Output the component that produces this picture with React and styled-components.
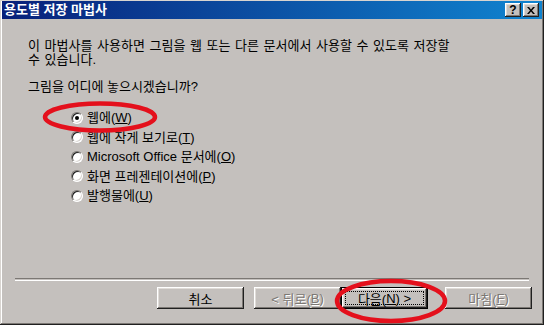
import React from 'react'
import styled, { createGlobalStyle } from 'styled-components'

const Global = createGlobalStyle`
	html, body { margin: 0; padding: 0; background: #c4c0bd; }
	body { font-family: "Liberation Sans", "Noto Sans CJK KR", sans-serif; font-size: 13px; }
`

const Window = styled.div`
	position: relative;
	box-sizing: border-box;
	width: 544px;
	height: 325px;
	display: flex;
	flex-direction: column;
	padding: 1px 2px 2px 2px;
	background: #c4c0bd;
	box-shadow: inset -1px -1px #202020, inset 1px 1px #d8d4d0,
		inset -2px -2px #7c7874, inset 2px 2px #ffffff;
`

const TitleBar = styled.div`
	height: 18px;
	display: flex;
	align-items: center;
	padding: 0 3px 0 2px;
	background: linear-gradient(to right, #08207a, #1084d0);
	color: #fff;
`

const Title = styled.span`
	flex: 1;
	font-weight: bold;
	font-size: 13px;
	line-height: 18px;
`

const CaptionButton = styled.span`
	box-sizing: border-box;
	width: 16px;
	height: 14px;
	margin-left: ${p => p.$gap || 0}px;
	display: flex;
	align-items: center;
	justify-content: center;
	background: #c4c0bd;
	color: #000;
	font-family: "Liberation Sans", sans-serif;
	font-weight: bold;
	font-size: 12px;
	box-shadow: inset -1px -1px #202020, inset 1px 1px #ffffff,
		inset -2px -2px #7c7874, inset 2px 2px #e0dcd8;
`

const Content = styled.div`
	flex: 1;
	padding: 20px 26px 0 26px;
	color: #000;
`

const Paragraph = styled.p`
	margin: 0;
	line-height: 14px;
	word-spacing: 1px;
`

const Question = styled.p`
	margin: 13px 0 0 0;
	line-height: 13px;
`

const Options = styled.div`
	margin: 15px 0 0 43px;
	display: flex;
	flex-direction: column;
`

const Option = styled.label`
	height: 19.5px;
	display: flex;
	align-items: center;
	gap: 4px;
	line-height: 13px;
`

const Radio = styled.span`
	box-sizing: border-box;
	width: 12px;
	height: 12px;
	border-radius: 50%;
	background: #fff;
	border: 1px solid;
	border-color: #7c7874 #ffffff #ffffff #7c7874;
	box-shadow: inset 1px 1px #202020, inset -1px -1px #d8d4d0;
	display: flex;
	align-items: center;
	justify-content: center;
	&::after {
		content: '';
		width: 4px;
		height: 4px;
		border-radius: 50%;
		background: ${p => (p.$checked ? '#000' : 'transparent')};
	}
`

const Footer = styled.div`
	padding: 0 10px 14px 13px;
`

const Separator = styled.div`
	height: 1px;
	margin-right: 3px;
	border-top: 1px solid #7c7874;
	border-bottom: 1px solid #ffffff;
`

const ButtonRow = styled.div`
	margin-top: 6px;
	display: flex;
	justify-content: flex-end;
`

const Button = styled.div`
	box-sizing: border-box;
	width: 87px;
	height: 22px;
	margin-left: ${p => p.$gap || 0}px;
	display: flex;
	align-items: center;
	justify-content: center;
	position: relative;
	background: #c4c0bd;
	color: ${p => (p.$disabled ? '#7c7874' : '#000')};
	text-shadow: ${p => (p.$disabled ? '1px 1px #fff' : 'none')};
	box-shadow: ${p =>
		p.$default
			? 'inset 0 0 0 1px #000, inset -2px -2px #202020, inset 2px 2px #fff, inset -3px -3px #7c7874, inset 3px 3px #e0dcd8'
			: 'inset -1px -1px #202020, inset 1px 1px #fff, inset -2px -2px #7c7874, inset 2px 2px #e0dcd8'};
`

const Focus = styled.span`
	position: absolute;
	inset: 4px;
	border: 1px dotted #000;
`

const Marks = styled.svg`
	position: absolute;
	left: 0;
	top: 0;
	pointer-events: none;
`

const options = [
	{ label: '웹에', key: 'W', checked: true },
	{ label: '웹에 작게 보기로', key: 'T' },
	{ label: 'Microsoft Office 문서에', key: 'O' },
	{ label: '화면 프레젠테이션에', key: 'P' },
	{ label: '발행물에', key: 'U' },
]

const App = () => (
	<Window>
		<Global />
		<TitleBar>
			<Title>용도별 저장 마법사</Title>
			<CaptionButton>?</CaptionButton>
			<CaptionButton $gap={2}>
				<svg width="8" height="7" viewBox="0 0 8 7">
					<path d="M0 0h2l2 2.5L6 0h2L5 3.5 8 7H6L4 4.5 2 7H0l3-3.5z" fill="#000" />
				</svg>
			</CaptionButton>
		</TitleBar>
		<Content>
			<Paragraph>
				이 마법사를 사용하면 그림을 웹 또는 다른 문서에서 사용할 수 있도록 저장할
				<br />
				수 있습니다.
			</Paragraph>
			<Question>그림을 어디에 놓으시겠습니까?</Question>
			<Options>
				{options.map(o => (
					<Option key={o.key}>
						<Radio $checked={o.checked} />
						<span>
							{o.label}(<u>{o.key}</u>)
						</span>
					</Option>
				))}
			</Options>
		</Content>
		<Footer>
			<Separator />
			<ButtonRow>
				<Button>취소</Button>
				<Button $gap={10} $disabled>
					&lt; 뒤로(<u>B</u>)
				</Button>
				<Button $default>
					<Focus />
					다음(<u>N</u>) &gt;
				</Button>
				<Button $gap={17} $disabled>
					마침(<u>F</u>)
				</Button>
			</ButtonRow>
		</Footer>
		<Marks width="544" height="325">
			<ellipse cx="100" cy="117" rx="55" ry="13.5" fill="none" stroke="#e4101c" strokeWidth="4.5" />
			<ellipse cx="391" cy="301" rx="54" ry="20" fill="none" stroke="#e4101c" strokeWidth="4.5" />
		</Marks>
	</Window>
)

export default App
